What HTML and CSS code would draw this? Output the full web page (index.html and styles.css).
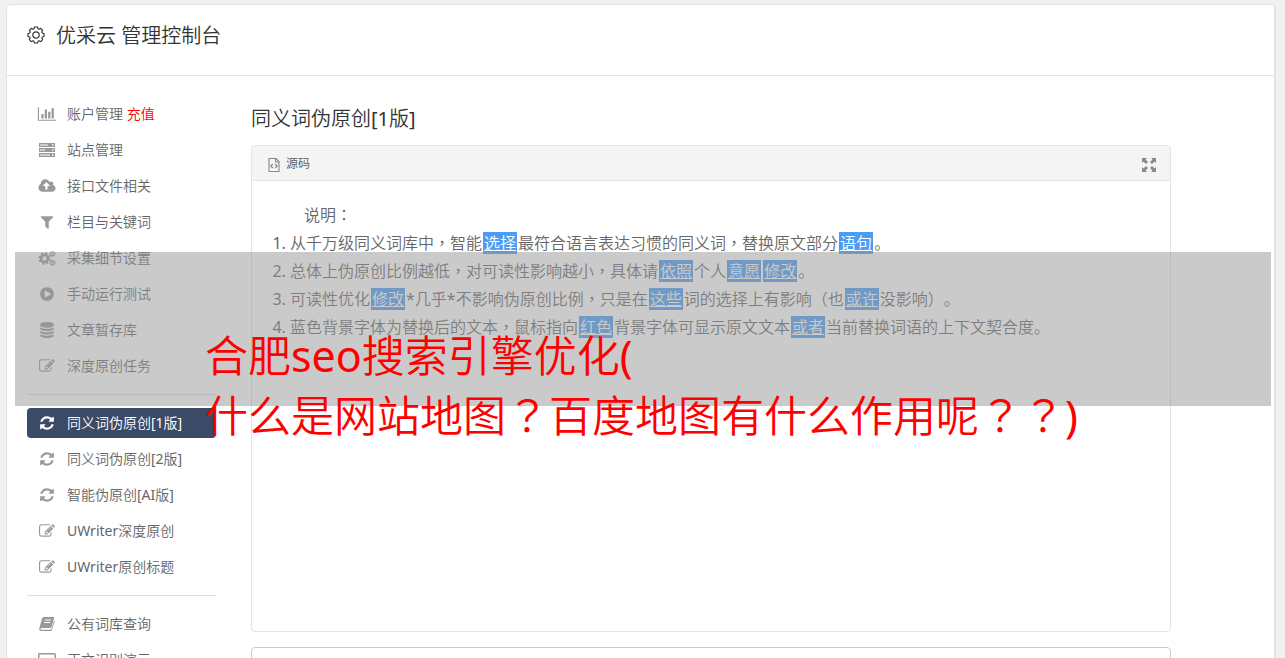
FILE: index.html
```
<!DOCTYPE html>
<html lang="zh-CN">
  <head>
    <meta charset="UTF-8" />
    <meta name="viewport" content="width=device-width, initial-scale=1.0" />
    <title>优采云 管理控制台</title>
    <link rel="stylesheet" href="styles.css">
  </head>

  <body>
    <!-- icon set -->
    <svg class="sprite" aria-hidden="true">
      <symbol id="i-chart" viewBox="-224 0 2240 1792"><path d="M512 896v512h-256v-512h256zm384-512v1024h-256v-1024h256zm1024 1152v128h-2048v-1536h128v1408h1920zm-640-896v768h-256v-768h256zm384-384v1152h-256v-1152h256z"/></symbol>
      <symbol id="i-server" viewBox="0 0 20 16"><path fill-rule="evenodd" d="M2 1h16v4H2zM3 2.500v1h8v-1zM15 2.200v1.500h1.500V2.200zM2 6h16v4H2zM3 7.500v1h5v-1zM15 7.200v1.500h1.500V7.200zM2 11h16v4H2zM3 12.500v1h10v-1zM15 12.200v1.500h1.500v-1.500z"/></symbol>
      <symbol id="i-cloud" viewBox="-224 0 2240 1792"><path d="M1216 864q0-14-9-23l-352-352q-9-9-23-9t-23 9l-351 351q-10 12-10 24 0 14 9 23t23 9h224v352q0 13 9.500 22.500t22.500 9.500h192q13 0 22.500-9.500t9.500-22.500v-352h224q13 0 22.500-9.500t9.500-22.500zm640 288q0 159-112.500 271.500t-271.500 112.500h-1088q-185 0-316.500-131.500t-131.500-316.500q0-130 70-240t188-165q-2-30-2-43 0-212 150-362t362-150q156 0 285.500 87t188.500 231q71-62 166-62 106 0 181 75t75 181q0 76-41 138 130 31 213.500 135.500t83.500 238.500z"/></symbol>
      <symbol id="i-filter" viewBox="-224 0 2240 1792"><path d="M1595 295q17 41-14 70l-493 493v742q0 42-39 59-13 5-25 5-27 0-45-19l-256-256q-19-19-19-45v-486l-493-493q-31-29-14-70 17-39 59-39h1280q42 0 59 39z"/></symbol>
      <symbol id="i-cogs" viewBox="0 0 20 16">
        <g fill="none" stroke="currentColor">
          <circle cx="7.500" cy="8.500" r="3.500" stroke-width="2.600"/>
          <circle cx="7.500" cy="8.500" r="5.400" stroke-width="1.600" stroke-dasharray="2.120 2.120"/>
          <circle cx="15.500" cy="4" r="1.700" stroke-width="1.300"/>
          <circle cx="15.500" cy="4" r="2.800" stroke-width="1" stroke-dasharray="1.100 1.100"/>
          <circle cx="15.500" cy="12.700" r="1.700" stroke-width="1.300"/>
          <circle cx="15.500" cy="12.700" r="2.800" stroke-width="1" stroke-dasharray="1.100 1.100"/>
        </g>
      </symbol>
      <symbol id="i-play" viewBox="-224 0 2240 1792"><path d="M896 128q209 0 385.500 103t279.500 279.500 103 385.500-103 385.500-279.500 279.500-385.500 103-385.500-103-279.500-279.500-103-385.500 103-385.500 279.500-279.500 385.500-103zm384 823q32-18 32-55t-32-55l-544-320q-31-19-64-1-32 19-32 56v640q0 37 32 56 16 8 32 8 17 0 32-9z"/></symbol>
      <symbol id="i-database" viewBox="-224 0 2240 1792"><path d="M896 768q237 0 443-43t325-127v170q0 69-103 128t-280 93.500-385 34.500-385-34.500-280-93.500-103-128v-170q119 84 325 127t443 43zm0 768q237 0 443-43t325-127v170q0 69-103 128t-280 93.500-385 34.500-385-34.500-280-93.500-103-128v-170q119 84 325 127t443 43zm0-384q237 0 443-43t325-127v170q0 69-103 128t-280 93.500-385 34.500-385-34.500-280-93.500-103-128v-170q119 84 325 127t443 43zm0-1152q208 0 385 34.500t280 93.500 103 128v128q0 69-103 128t-280 93.500-385 34.500-385-34.500-280-93.500-103-128v-128q0-69 103-128t280-93.500 385-34.500z"/></symbol>
      <symbol id="i-edit" viewBox="-224 0 2240 1792"><path d="M888 1184l116-116-152-152-116 116v56h96v96h56zm440-720q-16-16-33 1l-350 350q-17 17-1 33t33-1l350-350q17-17 1-33zm80 594v190q0 119-84.500 203.500t-203.500 84.500h-832q-119 0-203.500-84.500t-84.500-203.500v-832q0-119 84.500-203.500t203.500-84.500h832q63 0 117 25 15 7 18 23 3 17-9 29l-49 49q-14 14-32 8-23-6-45-6h-832q-66 0-113 47t-47 113v832q0 66 47 113t113 47h832q66 0 113-47t47-113v-126q0-13 9-22l64-64q15-15 35-7t20 29zm-96-738l288 288-672 672h-288v-288zm444 132l-92 92-288-288 92-92q28-28 68-28t68 28l152 152q28 28 28 68t-28 68z"/></symbol>
      <symbol id="i-refresh" viewBox="-224 0 2240 1792"><path d="M1639 1056q0 5-1 7-64 268-268 434.500t-478 166.500q-146 0-282.500-55t-243.500-157l-129 129q-19 19-45 19t-45-19-19-45v-448q0-26 19-45t45-19h448q26 0 45 19t19 45-19 45l-137 137q71 66 161 102t187 36q134 0 250-65t186-179q11-17 53-117 8-23 30-23h192q13 0 22.500 9.500t9.500 22.500zm25-800v448q0 26-19 45t-45 19h-448q-26 0-45-19t-19-45 19-45l138-138q-148-137-349-137-134 0-250 65t-186 179q-11 17-53 117-8 23-30 23h-199q-13 0-22.500-9.500t-9.500-22.500v-7q65-268 270-434.500t480-166.500q146 0 284 55.500t245 156.500l130-129q19-19 45-19t45 19 19 45z"/></symbol>
      <symbol id="i-book" viewBox="0 0 20 16"><path fill-rule="evenodd" d="M7 1h9q1.500 0 1 1.500L14.400 11q-.4 1-1.400 1H4.500q-1 0-1 .8t1 .9h9q.7 0 1-.8L17 4.500q.8.500.5 1.500L15 14q-.4 1-1.500 1h-9Q2 15 2.200 12.500L5 2.500Q5.500 1 7 1zM8 3.500l-.4 1h6l.4-1zM7.300 6l-.4 1h6l.4-1z"/></symbol>
      <symbol id="i-screen" viewBox="0 0 20 16"><path fill-rule="evenodd" d="M2.500 1h15Q19 1 19 2.500v9q0 1.500-1.500 1.500H12v1h2v1H6v-1h2v-1H2.500Q1 13 1 11.500v-9Q1 1 2.500 1zM2.500 2.500v8h15v-8z"/></symbol>
      <symbol id="i-gear" viewBox="0 0 18 18">
        <g fill="none" stroke="currentColor" stroke-width="1.200" stroke-linejoin="round">
          <path d="M7.500 1h3l.5 1.700 1 .5 1.700-.9 2 2-.9 1.700.5 1L17 7.500v3l-1.700.5-.5 1 .9 1.700-2 2-1.700-.9-1 .5-.5 1.700h-3L7 15.300l-1-.5-1.700.9-2-2 .9-1.700-.5-1L1 10.500v-3L2.700 7l.5-1-.9-1.700 2-2 1.700.9 1-.5z"/>
          <circle cx="9" cy="9" r="3.200"/>
        </g>
      </symbol>
      <symbol id="i-source" viewBox="0 0 12 14">
        <path fill="none" stroke="currentColor" d="M1 .5h7L11 3.500v10H1zM7.500.5v3.500H11" stroke-width="1.100"/>
        <path fill="none" stroke="currentColor" d="M4.800 6L2.800 8l2 2M7.200 6l2 2-2 2" stroke-width="1.200"/>
      </symbol>
      <symbol id="i-expand" viewBox="0 0 14 14"><path d="M0 0h5L3.500 1.500 6 4 4 6 1.500 3.500 0 5zM14 0v5l-1.500-1.500L10 6 8 4l2.500-2.500L9 0zM0 14V9l1.500 1.500L4 8l2 2-2.500 2.500L5 14zM14 14H9l1.500-1.500L8 10l2-2 2.500 2.500L14 9z"/></symbol>
    </svg>

    <div class="page">
      <header class="page-header">
        <svg class="gear"><use href="#i-gear"/></svg>
        <h1>优采云 管理控制台</h1>
      </header>

      <div class="content">
        <nav class="sidebar">
          <ul>
            <li><a href="#"><svg><use href="#i-chart"/></svg><span>账户管理 <span class="recharge">充值</span></span></a></li>
            <li><a href="#"><svg><use href="#i-server"/></svg><span>站点管理</span></a></li>
            <li><a href="#"><svg><use href="#i-cloud"/></svg><span>接口文件相关</span></a></li>
            <li><a href="#"><svg><use href="#i-filter"/></svg><span>栏目与关键词</span></a></li>
            <li><a href="#"><svg><use href="#i-cogs"/></svg><span>采集细节设置</span></a></li>
            <li><a href="#"><svg><use href="#i-play"/></svg><span>手动运行测试</span></a></li>
            <li><a href="#"><svg><use href="#i-database"/></svg><span>文章暂存库</span></a></li>
            <li><a href="#"><svg><use href="#i-edit"/></svg><span>深度原创任务</span></a></li>
            <li class="divider"></li>
            <li><a href="#" class="active"><svg><use href="#i-refresh"/></svg><span>同义词伪原创[1版]</span></a></li>
            <li><a href="#"><svg><use href="#i-refresh"/></svg><span>同义词伪原创[2版]</span></a></li>
            <li><a href="#"><svg><use href="#i-refresh"/></svg><span>智能伪原创[AI版]</span></a></li>
            <li><a href="#"><svg><use href="#i-edit"/></svg><span>UWriter深度原创</span></a></li>
            <li><a href="#"><svg><use href="#i-edit"/></svg><span>UWriter原创标题</span></a></li>
            <li class="divider"></li>
            <li><a href="#"><svg><use href="#i-book"/></svg><span>公有词库查询</span></a></li>
            <li><a href="#"><svg><use href="#i-screen"/></svg><span>正文识别演示</span></a></li>
          </ul>
        </nav>

        <main class="main">
          <h2>同义词伪原创[1版]</h2>
          <div class="editor">
            <div class="toolbar">
              <button type="button" class="source-btn"><svg><use href="#i-source"/></svg>源码</button>
              <button type="button" class="expand-btn" aria-label="全屏"><svg><use href="#i-expand"/></svg></button>
            </div>
            <div class="editor-body">
              <p>说明<span class="mid" lang="zh-TW">：</span></p>
              <ol>
                <li>从千万级同义词库中<span class="mid" lang="zh-TW">，</span>智能<u>选择</u>最符合语言表达习惯的同义词<span class="mid" lang="zh-TW">，</span>替换原文部分<u>语句</u>。</li>
                <li>总体上伪原创比例越低<span class="mid" lang="zh-TW">，</span>对可读性影响越小<span class="mid" lang="zh-TW">，</span>具体请<u>依照</u>个人<u>意愿</u><u>修改</u>。</li>
                <li>可读性优化<u>修改</u>*几乎*不影响伪原创比例<span class="mid" lang="zh-TW">，</span>只是在<u>这些</u>词的选择上有影响<span class="mid" lang="zh-TW">（</span>也<u>或许</u>没影响<span class="mid" lang="zh-TW">）</span>。</li>
                <li>蓝色背景字体为替换后的文本<span class="mid" lang="zh-TW">，</span>鼠标指向<u>红色</u>背景字体可显示原文文本<u>或者</u>当前替换词语的上下文契合度。</li>
              </ol>
            </div>
          </div>
          <div class="result"></div>
        </main>
      </div>
    </div>

    <div class="banner">
      合肥seo搜索引擎优化(<br>
      什么是网站地图<span class="mid" lang="zh-TW">？</span>百度地图有什么作用呢<span class="mid" lang="zh-TW">？？</span>)
    </div>
  </body>
</html>
```
FILE: styles.css
```
* {
  margin: 0;
  padding: 0;
  box-sizing: border-box;
}

body {
  position: relative;
  height: 100vh;
  overflow: hidden;
  padding: 4px 9px 0 6px;
  background-color: #f1f1f1;
  color: #666;
  font-family: "Noto Sans", "Noto Sans CJK SC DemiLight", "Noto Sans CJK SC Light", "Noto Sans CJK SC", sans-serif;
  font-size: 14px;
  text-spacing-trim: space-all;
}

svg {
  fill: currentColor;
  flex-shrink: 0;
}

.sprite {
  display: none;
}

/* full-width marks that sit in the middle of their cell */
.mid {
  font-family: "Noto Sans", "Noto Sans CJK TC DemiLight", "Noto Sans CJK TC Light", "Noto Sans CJK TC", sans-serif;
}

.page {
  background: white;
  border: 1px solid #e4e4e4;
  border-right-width: 2px;
  border-radius: 5px 5px 0 0;
}

.page-header {
  display: flex;
  align-items: center;
  gap: 11px;
  height: 71px;
  padding: 0 20px 9px;
  border-bottom: 1px solid #e4e4e4;
  color: #333;
}

.page-header h1,
.main h2 {
  font-size: 20px;
  font-weight: normal;
  line-height: 28px;
  color: #333;
}

.gear {
  width: 18px;
  height: 18px;
  margin-bottom: 2px;
}

.content {
  display: flex;
  gap: 35px;
  padding: 23px 20px 0;
}

.sidebar {
  flex: 0 0 189px;
}

.sidebar ul {
  display: flex;
  flex-direction: column;
  gap: 6px;
  list-style: none;
}

.sidebar a {
  display: flex;
  align-items: center;
  gap: 10px;
  height: 30px;
  padding-left: 10px;
  border-radius: 4px;
  color: #666;
  text-decoration: none;
  white-space: nowrap;
}

.sidebar a > span {
  padding-bottom: 2px;
}

.sidebar svg {
  width: 20px;
  height: 16px;
  color: #999;
}

.sidebar .active {
  background-color: #3b4a66;
  color: white;
}

.sidebar .active svg {
  color: white;
}

.sidebar .divider {
  height: 1px;
  margin: 7px 0;
  background-color: #ddd;
}

.sidebar .recharge {
  color: red;
}

.main {
  flex: 1;
  max-width: 920px;
}

.main h2 {
  margin: 6px 0 12px;
}

.editor {
  border: 1px solid #e4e4e4;
  border-radius: 4px;
  overflow: hidden;
}

.toolbar {
  display: flex;
  justify-content: space-between;
  align-items: center;
  height: 35px;
  padding: 0 14px 0 16px;
  background-color: #f4f4f4;
  border-bottom: 1px solid #e4e4e4;
}

.toolbar button {
  display: flex;
  align-items: center;
  gap: 6px;
  border: none;
  background: none;
  color: #555;
  font: inherit;
  font-size: 12px;
}

.toolbar svg {
  margin-top: 3px;
  color: #888;
}

.source-btn svg {
  width: 12px;
  height: 14px;
}

.expand-btn svg {
  width: 14px;
  height: 14px;
}

.editor-body {
  min-height: 450px;
  padding: 20px;
  font-size: 16px;
  line-height: 28px;
}

.editor-body p {
  text-indent: 2em;
}

.editor-body ol {
  padding-left: 18px;
}

.editor-body u {
  margin: 0 1px;
  padding: 0 1px;
  background-color: #4a9df5;
  color: white;
}

.result {
  height: 200px;
  margin-top: 15px;
  border: 1px solid #ccc;
  border-radius: 4px;
}

/* translucent caption over the page */
.banner {
  position: absolute;
  top: 252px;
  left: 15px;
  right: 14px;
  height: 154px;
  padding: 74px 0 0 190px;
  background-color: rgba(150, 150, 150, 0.5);
  color: red;
  font-size: 43px;
  line-height: 60px;
  white-space: nowrap;
}
```
